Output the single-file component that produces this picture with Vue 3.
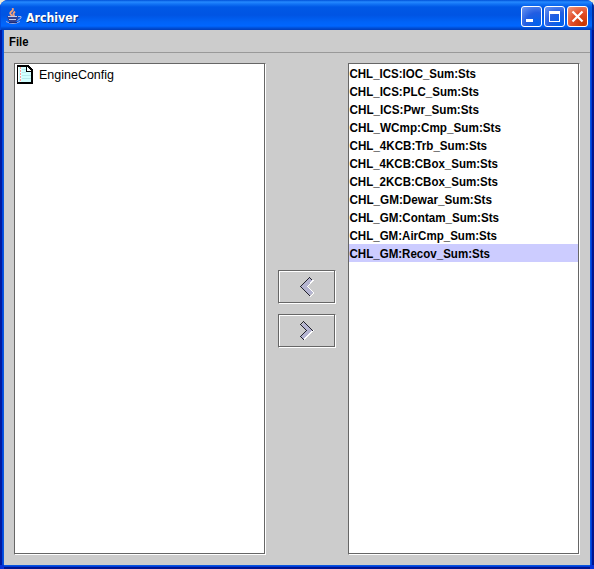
<script setup>
const channels = [
  { name: 'CHL_ICS:IOC_Sum:Sts', width: 126.5 },
  { name: 'CHL_ICS:PLC_Sum:Sts', width: 129.5 },
  { name: 'CHL_ICS:Pwr_Sum:Sts', width: 129.5 },
  { name: 'CHL_WCmp:Cmp_Sum:Sts', width: 151.5 },
  { name: 'CHL_4KCB:Trb_Sum:Sts', width: 137.5 },
  { name: 'CHL_4KCB:CBox_Sum:Sts', width: 148.5 },
  { name: 'CHL_2KCB:CBox_Sum:Sts', width: 148.5 },
  { name: 'CHL_GM:Dewar_Sum:Sts', width: 142.5 },
  { name: 'CHL_GM:Contam_Sum:Sts', width: 149.5 },
  { name: 'CHL_GM:AirCmp_Sum:Sts', width: 147.5 },
  { name: 'CHL_GM:Recov_Sum:Sts', width: 140.5 },
]
const selected = 10

// Diagonal run of single pixels, from (x, y) in direction (dx, dy).
const run = (x, y, dx, dy, count) =>
  Array.from({ length: count }, (_, i) => `M${x + dx * i} ${y + dy * i}h1v1h-1z`).join('')

const leftDark = run(9, 0, -1, 1, 10) + run(1, 10, 1, 1, 9) + run(10, 1, 1, 1, 2)
const leftLight = run(13, 3, -1, 1, 7) + run(8, 10, 1, 1, 6) + run(13, 16, -1, 1, 4) + run(12, 3, -1, 1, 3)
const rightDark = run(3, 0, 1, 1, 10) + run(2, 1, -1, 1, 3) + run(1, 4, 1, 1, 6) + run(5, 10, -1, 1, 6) + run(1, 16, 1, 1, 3)
const rightLight = run(13, 9, -1, 1, 10) + run(12, 9, -1, 1, 9)
</script>

<template>
  <div class="window">
    <header class="titlebar">
      <svg class="java" width="16" height="17" viewBox="0 0 16 17">
        <path d="M6.500 8C3 5.500 4 4.500 6 3Q7.500 2 6.500 0M8.500 8Q6 6 9 3.500" fill="none" stroke="#f5a27a" stroke-width="1.800" />
        <path d="M1 8H12Q12 12.500 9.500 14H4Q1.500 12 1 8Z" fill="#34418e" />
        <path d="M2 8.500H11M3 11.500H10" stroke="#c3cdef" />
        <path d="M12 8.500H15V10L11.500 12.500" fill="none" stroke="#a9b2df" />
        <path d="M0 13.500Q7 17.500 14 13.500" fill="none" stroke="#9fa9dc" />
        <path d="M3 14.500H11" stroke="#1c2b79" />
      </svg>
      <svg class="title" width="56" height="20"><text x="0" y="15" textLength="52" lengthAdjust="spacingAndGlyphs">Archiver</text></svg>
      <div class="controls">
        <button class="control" aria-label="Minimize"><svg width="19" height="19"><path d="M4 12H11V15H4Z" fill="#fff" /></svg></button>
        <button class="control" aria-label="Maximize"><svg width="19" height="19"><path d="M4 4H15V15H4ZM5 7V14H14V7Z" fill="#fff" fill-rule="evenodd" /></svg></button>
        <button class="control close" aria-label="Close"><svg width="19" height="19"><path d="M4.500 4.500L14.500 14.500M14.500 4.500L4.500 14.500" stroke="#fff" stroke-width="2.200" /></svg></button>
      </div>
    </header>
    <div class="client">
      <nav class="menu"><svg width="40" height="22"><text x="0" y="16" textLength="19.500" lengthAdjust="spacingAndGlyphs">File</text></svg></nav>
      <main class="body">
        <section class="list tree">
          <svg class="document" width="16" height="19" viewBox="0 0 16 19" shape-rendering="crispEdges">
            <path d="M0 0H11L16 5V19H0Z" fill="#000" />
            <path d="M1 2H10V7H14V17H1Z" fill="#d2ffff" />
            <path d="M1 2H2V17H1ZM3 2H4V17H3Z" fill="#fff" />
            <path d="M3.500 2V17" stroke="#ff9b9b" stroke-dasharray="2 1" />
            <path d="M5 4.500H9M5 7.500H9M5 10.500H14M5 13.500H14" stroke="#b8e8ec" />
            <path d="M9 1H10V6H15V7H9Z" fill="#000" />
            <path d="M10 2H11V3H12V4H13V5H14V6H10Z" fill="#fff" />
          </svg>
          <svg class="engine" width="90" height="18"><text x="0" y="13" textLength="75" lengthAdjust="spacingAndGlyphs">EngineConfig</text></svg>
        </section>
        <div class="transfer">
          <button class="move" aria-label="Move left">
            <svg width="15" height="21" viewBox="0 0 15 21" shape-rendering="crispEdges">
              <path d="M9 1L13 4L7.500 10L13 16L9.500 19L1 10Z" fill="#b4b4d0" />
              <path :d="leftLight" fill="#fff" />
              <path :d="leftDark" fill="#20202c" />
            </svg>
          </button>
          <button class="move" aria-label="Move right">
            <svg width="15" height="21" viewBox="0 0 15 21" shape-rendering="crispEdges">
              <path d="M4 1L13 9.500L4 18.500L1 15.500L7 9.500L1 4Z" fill="#b4b4d0" />
              <path :d="rightLight" fill="#fff" />
              <path :d="rightDark" fill="#20202c" />
            </svg>
          </button>
        </div>
        <section class="list channels">
          <div v-for="(channel, index) in channels" :key="channel.name" class="row" :class="{ selected: index === selected }">
            <svg width="229" height="18"><text x="0.500" y="14" :textLength="channel.width" lengthAdjust="spacingAndGlyphs">{{ channel.name }}</text></svg>
          </div>
        </section>
      </main>
    </div>
  </div>
</template>

<style>
body { margin: 0; background: #ece9d8; }
</style>

<style scoped>
* { box-sizing: border-box; }
svg { display: block; flex: none; }
.window { width: 594px; height: 569px; display: flex; flex-direction: column; overflow: hidden; border-radius: 8px 8px 0 0; background: #0831d9; font-family: "Liberation Sans", Arial, sans-serif; }
.titlebar { height: 30px; flex: none; display: flex; align-items: flex-start; padding: 6px 6px 0 6px; background: linear-gradient(#0050d8 0, #2589ff 2px, #1273f5 4px, #0058e6 7px, #0054e3 15px, #0063f7 22px, #0066ff 26px, #004fd7 28px, #003dba 30px); box-shadow: inset 1px 0 #004de0, inset -2px 0 #002c9d; }
.java { margin-top: 2px; }
.title { margin: 1px 0 0 4px; overflow: visible; font: bold 12.5px "DejaVu Sans", sans-serif; fill: #fff; text-shadow: 1px 1px #06307d; }
.controls { display: flex; gap: 2px; margin-left: auto; }
.control { width: 21px; height: 21px; padding: 0; border: 1px solid #fff; border-radius: 3px; background: radial-gradient(circle at 80% 90%, #0061ed 0, #225de2 50%, #6d96f1 100%); }
.close { background: radial-gradient(circle at 80% 90%, #c73600 0, #e24d29 50%, #f09b80 100%); }
.client { height: 535px; margin: 0 4px; background: #ccc; flex: none; box-shadow: -1px 0 #0855dd, 1px 0 #0855dd, 0 1px #0855dd, -2px 0 #0046e0, 2px 0 #003bda, 0 2px #003bda, -4px 0 #0019a0, 4px 0 #001590, 0 4px #001590; }
.menu { height: 23px; border-bottom: 1px solid #999; padding-left: 5px; font-size: 13px; font-weight: bold; }
.body { display: flex; padding: 10px 10px 0; }
.list { height: 492px; border: 1px solid #666; border-right-color: #fff; border-bottom-color: #fff; box-shadow: inset -1px -1px #666; background: #fff; }
.tree { width: 252px; display: flex; padding: 1px 0 0 2px; }
.engine { margin: 1px 0 0 6px; font-size: 12.5px; }
.transfer { width: 82px; display: flex; flex-direction: column; align-items: center; gap: 10px; padding-top: 207px; }
.move { width: 58px; height: 34px; padding: 0; border: 1px solid #666; border-right-color: #fff; border-bottom-color: #fff; background: #ccc; box-shadow: inset -1px -1px #666, inset 1px 1px #fff; display: flex; justify-content: center; align-items: center; }
.channels { width: 232px; }
.row { width: 229px; height: 18px; font-size: 12.5px; font-weight: bold; }
.selected { background: #ccf; }
</style>
